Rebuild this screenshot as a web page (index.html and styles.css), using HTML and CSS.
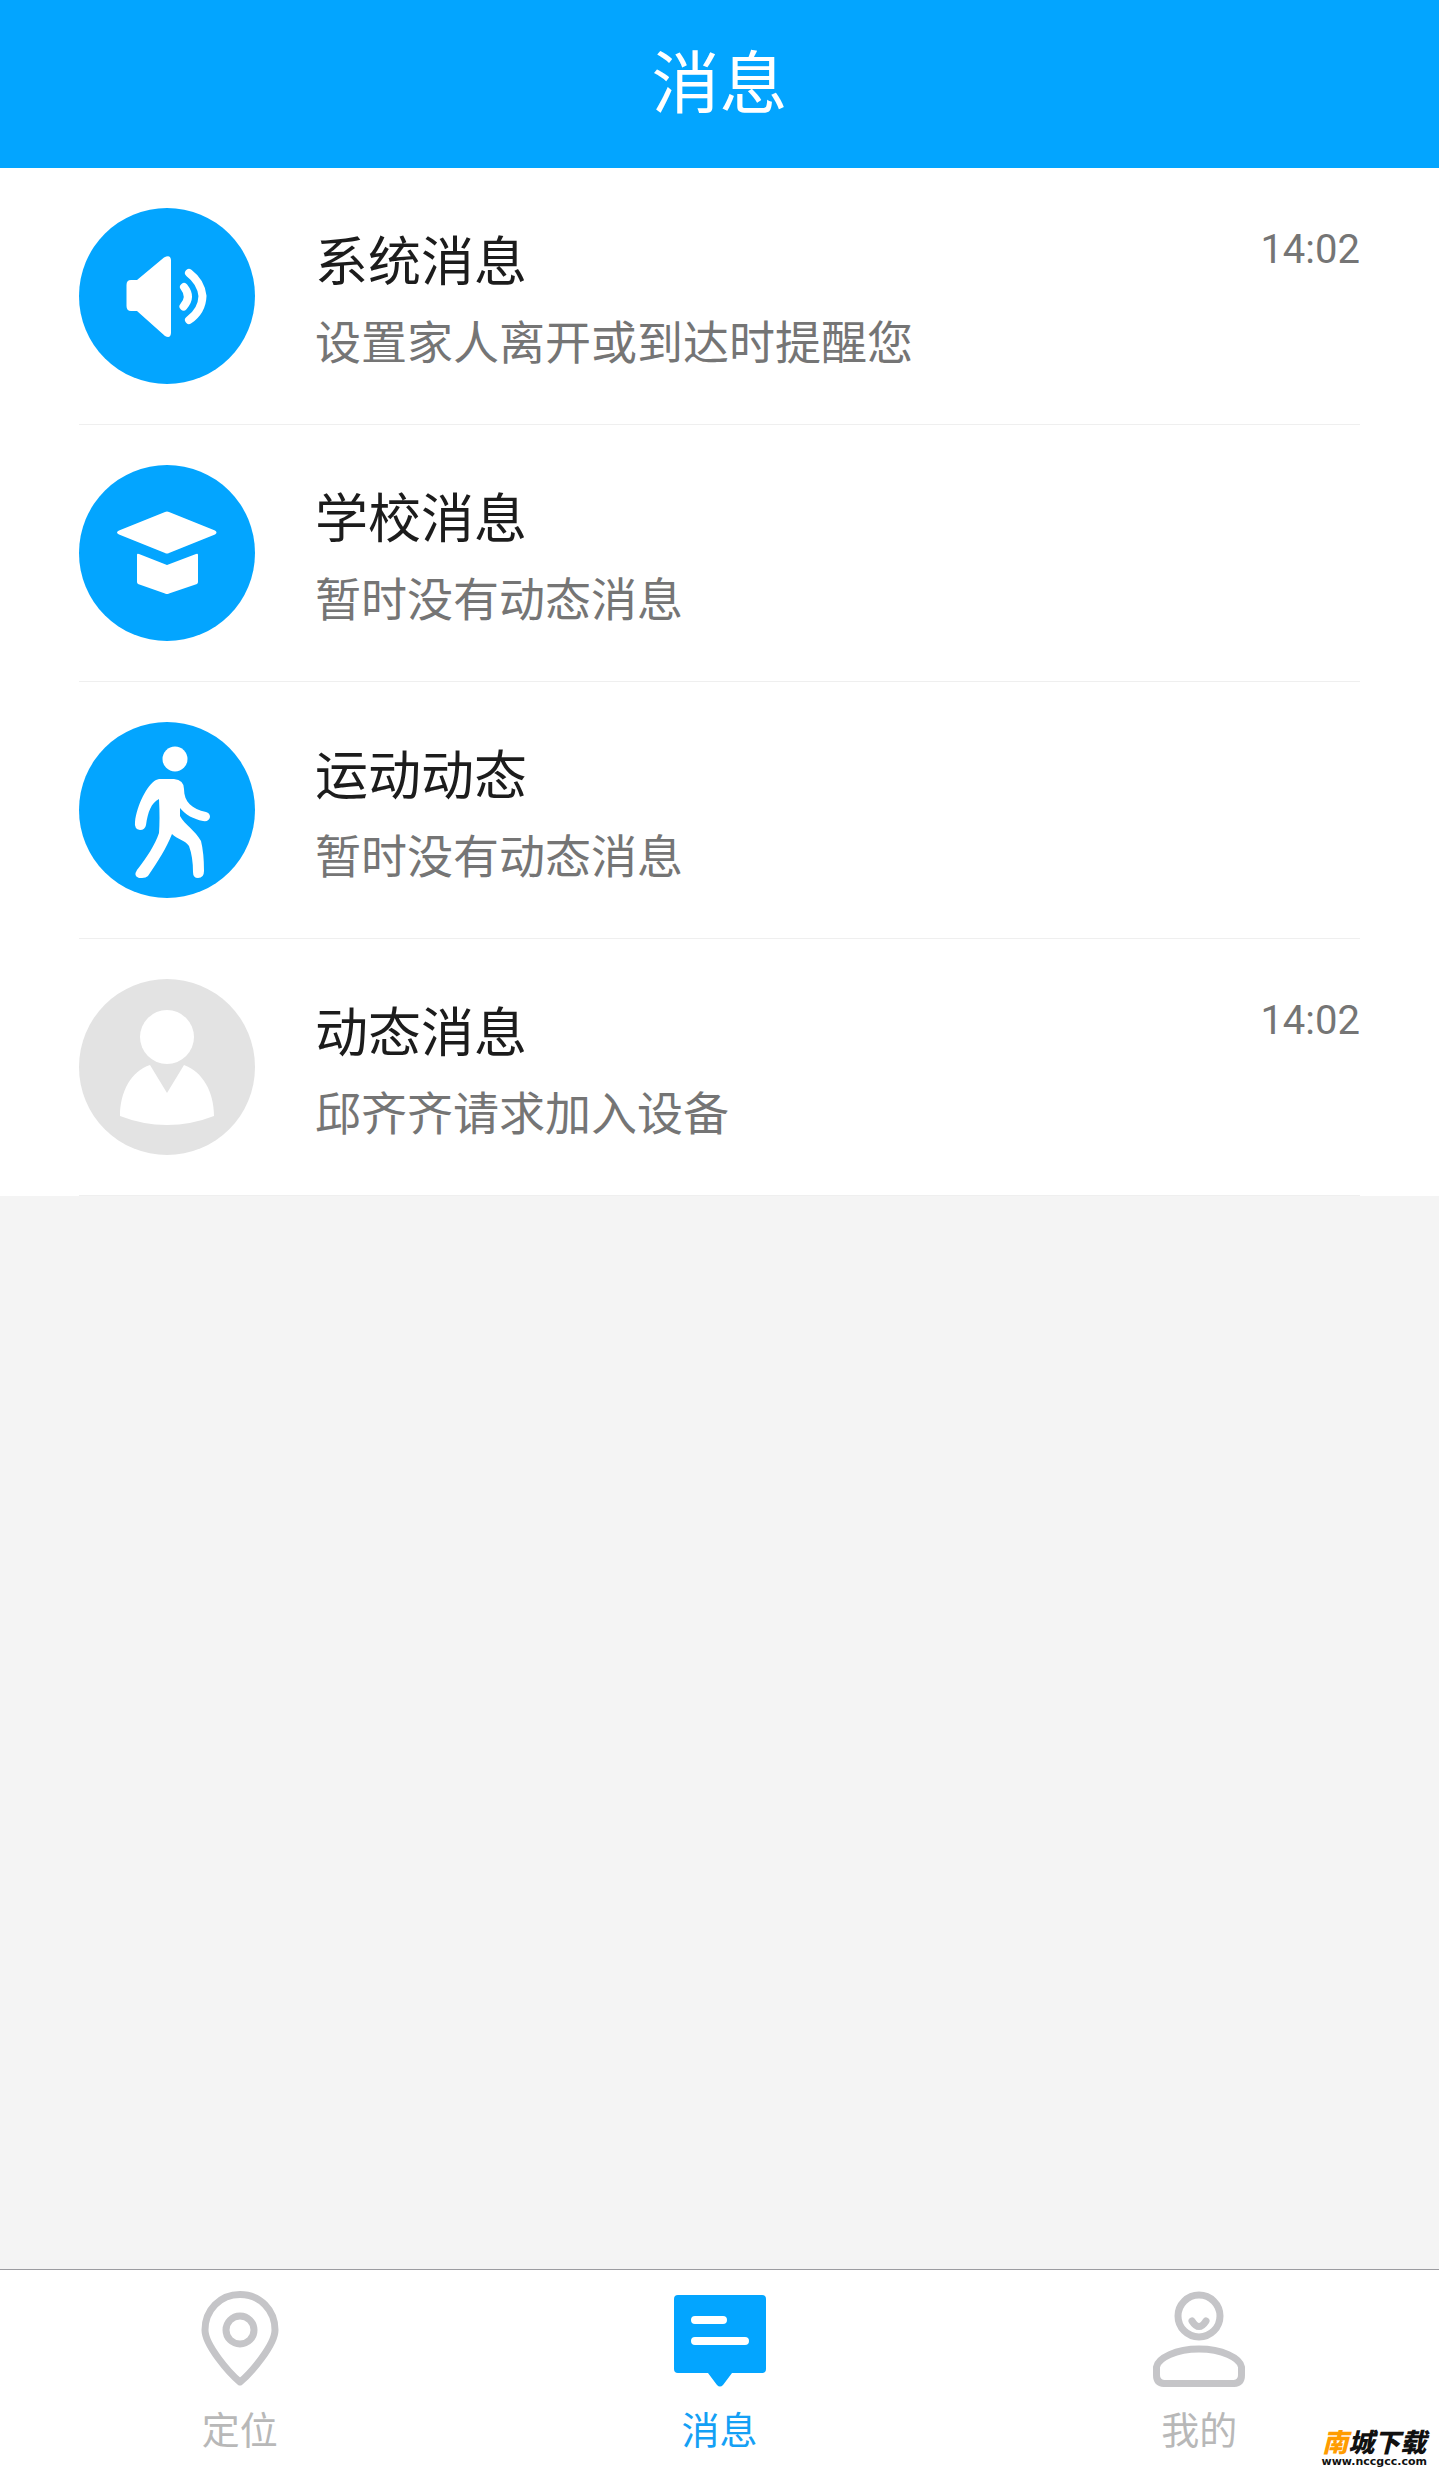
FILE: index.html
```html
<!DOCTYPE html>
<html lang="zh-CN">
<head>
<meta charset="utf-8">
<meta name="viewport" content="width=device-width, initial-scale=1">
<title>消息</title>
<link rel="stylesheet" href="styles.css">
</head>
<body>
<header class="header"><h1 class="header-title">消息</h1></header>

<main class="main">
  <ul class="messages">
    <li class="message">
      <a class="message-link" href="#system">
        <svg class="avatar" viewBox="0 0 176 176" aria-hidden="true">
          <circle class="disc" cx="88" cy="88" r="88"/>
          <path class="shape" d="M52 72H58L85 49.500Q91.500 46 92 52V125Q91.500 131 86 128L58 103H52Q47.500 103 47.500 98V77Q47.500 72 52 72Z"/>
          <path class="wave" d="M105 79Q113 89 104.500 98.500M110 65Q122 74 123.500 88Q123 103 110 112"/>
        </svg>
        <div class="message-text">
          <h2 class="message-title">系统消息</h2>
          <p class="message-desc">设置家人离开或到达时提醒您</p>
        </div>
        <time class="message-time">14:02</time>
      </a>
    </li>
    <li class="message">
      <a class="message-link" href="#school">
        <svg class="avatar" viewBox="0 0 176 176" aria-hidden="true">
          <circle class="disc" cx="88" cy="88" r="88"/>
          <path class="shape" d="M86 47Q88 46 90 47L136 65.500Q139 67.500 136 69.500L90 88Q88 89 86 88L40 69.500Q36 67.500 40 65.500Z"/>
          <path class="shape" d="M58 90Q58 88 60 89L88 100L117 89Q119 88 119 90V117Q119 118 118 119L90 128.500Q88 129.500 86 128.500L59 119Q58 118 58 117Z"/>
        </svg>
        <div class="message-text">
          <h2 class="message-title">学校消息</h2>
          <p class="message-desc">暂时没有动态消息</p>
        </div>
      </a>
    </li>
    <li class="message">
      <a class="message-link" href="#sports">
        <svg class="avatar" viewBox="0 0 176 176" aria-hidden="true">
          <circle class="disc" cx="88" cy="88" r="88"/>
          <circle class="shape" cx="96" cy="37" r="12.500"/>
          <path class="shape" d="M80 57H95Q105 58 105 67C105 80 113 87 127 90Q131 91 131 95Q130 100 124 99C114 97 107 93 101 86V94C106 103 116 108 122 119Q125 131 125 149Q125 156 119 156Q114 156 114 150Q114 135 110 124C106 118 98 117 93 112C87 127 79 139 69 154Q67 156 63 156H60Q54 154 58 148C68 135 76 123 80 111Q81 97 80 77C72 81 69 90 67 103Q66 108 61 108Q55 107 56 100C58 83 68 63 77 58Z"/>
        </svg>
        <div class="message-text">
          <h2 class="message-title">运动动态</h2>
          <p class="message-desc">暂时没有动态消息</p>
        </div>
      </a>
    </li>
    <li class="message">
      <a class="message-link" href="#activity">
        <svg class="avatar" viewBox="0 0 176 176" aria-hidden="true">
          <circle class="disc-muted" cx="88" cy="88" r="88"/>
          <circle class="shape" cx="88" cy="58" r="27"/>
          <path class="shape" d="M71 86L88 114L105 86C124 93 135 113 135 137Q112 146 88 146Q64 146 41 137C41 113 52 92 71 86Z"/>
        </svg>
        <div class="message-text">
          <h2 class="message-title">动态消息</h2>
          <p class="message-desc">邱齐齐请求加入设备</p>
        </div>
        <time class="message-time">14:02</time>
      </a>
    </li>
  </ul>
</main>

<nav class="tabs">
  <a class="tab" href="#location">
    <svg class="tab-icon" viewBox="0 0 92 96" aria-hidden="true">
      <path class="line" d="M46 91C35 82 11 54 11 39C11 19 26 3.500 46 3.500S81 19 81 39C81 54 57 82 46 91Z"/>
      <circle class="line" cx="46" cy="39" r="14"/>
    </svg>
    <span>定位</span>
  </a>
  <a class="tab tab-active" href="#messages" aria-current="page">
    <svg class="tab-icon" viewBox="0 0 92 96" aria-hidden="true">
      <path class="bubble" d="M4 4H88Q92 4 92 8V78Q92 82 88 82H58L49 94Q46 97 43 94L34 82H4Q0 82 0 78V8Q0 4 4 4Z"/>
      <path class="bubble-line" d="M21 29H49M21 50H71"/>
    </svg>
    <span>消息</span>
  </a>
  <a class="tab" href="#mine">
    <svg class="tab-icon" viewBox="0 0 92 96" aria-hidden="true">
      <circle class="line" cx="46" cy="25" r="21"/>
      <path class="line" d="M39 30Q46 41 53 30"/>
      <path class="line" d="M11 92.500Q3.500 92 3.500 84V76C5 67 23 58 46 58S87 67 88.500 76V84Q88.500 92 81 92.500Z"/>
    </svg>
    <span>我的</span>
  </a>
  <div class="watermark">
    <div class="watermark-name"><span class="watermark-accent">南</span>城下载</div>
    <div class="watermark-url">www.nccgcc.com</div>
  </div>
</nav>
</body>
</html>
```
FILE: styles.css
```css
* {
  box-sizing: border-box;
}

body {
  margin: 0;
  min-height: 100vh;
  display: flex;
  flex-direction: column;
  background: #f4f4f4;
  font-family: Roboto, "Noto Sans CJK SC", sans-serif;
}

h1, h2, p, ul {
  margin: 0;
  padding: 0;
  font-weight: 400;
}

a {
  color: inherit;
  text-decoration: none;
}

.header {
  height: 168px;
  padding-top: 35px;
  background: #03a5ff;
  color: #fff;
  text-align: center;
}

.header-title {
  font-size: 68px;
  line-height: 100px;
}

.main {
  flex: 1;
}

.messages {
  padding: 0 79px;
  background: #fff;
  list-style: none;
}

.message {
  border-bottom: 1px solid #efefef;
}

.message-link {
  display: flex;
  align-items: flex-start;
  padding: 40px 0;
}

.avatar {
  flex: none;
  width: 176px;
  height: 176px;
  margin-right: 60px;
}

.disc {
  fill: #03a5ff;
}

.disc-muted {
  fill: #e3e3e3;
}

.shape {
  fill: #fff;
}

.wave {
  fill: none;
  stroke: #fff;
  stroke-width: 8;
  stroke-linecap: round;
}

.message-text {
  flex: 1;
  padding-top: 15px;
}

.message-title {
  color: #1c1c1c;
  font-size: 53px;
  line-height: 80px;
}

.message-desc {
  color: #757575;
  font-size: 46px;
  line-height: 80px;
}

.message-time {
  padding-top: 16px;
  color: #757575;
  font-size: 40px;
  line-height: 52px;
}

.tabs {
  position: relative;
  display: flex;
  height: 198px;
  border-top: 1px solid #9c9ca0;
  background: #fff;
}

.tab {
  flex: 1;
  display: flex;
  flex-direction: column;
  align-items: center;
  gap: 14px;
  padding-top: 21px;
  color: #b8b8b8;
  font-size: 38px;
  line-height: 60px;
}

.tab-active {
  color: #14a0f5;
}

.tab-icon {
  width: 92px;
  height: 96px;
}

.line {
  fill: none;
  stroke: #c5c5c8;
  stroke-width: 7;
  stroke-linecap: round;
  stroke-linejoin: round;
}

.bubble {
  fill: #03a5ff;
}

.bubble-line {
  stroke: #fff;
  stroke-width: 8;
  stroke-linecap: round;
}

.watermark {
  position: absolute;
  right: 12px;
  bottom: 0;
  color: #111;
  text-align: center;
}

.watermark-name {
  font: italic 900 26px/30px "Noto Sans CJK SC", sans-serif;
}

.watermark-accent {
  color: #ff9c00;
}

.watermark-url {
  font: bold 11px/11px "DejaVu Sans", sans-serif;
}
```
